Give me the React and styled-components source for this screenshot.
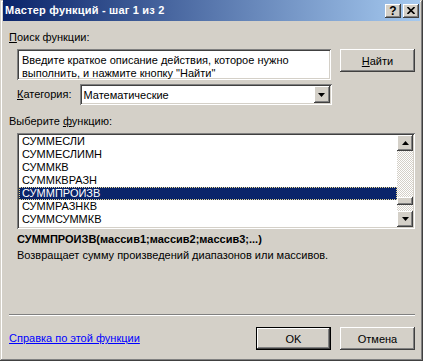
import styled, { createGlobalStyle, css } from "styled-components";

const Global = createGlobalStyle`
  html, body {
    margin: 0;
    padding: 0;
    background: #d4d0c8;
  }
  body {
    font-family: "Liberation Sans", Arial, sans-serif;
    font-size: 11px;
    color: #000;
  }
`;

const raised = css`
  background: #d4d0c8;
  box-shadow: inset -1px -1px #404040, inset 1px 1px #fff,
    inset -2px -2px #808080, inset 2px 2px #d4d0c8;
`;

const sunken = css`
  background: #fff;
  box-shadow: inset 1px 1px #808080, inset -1px -1px #fff,
    inset 2px 2px #404040, inset -2px -2px #d4d0c8;
`;

const Window = styled.div`
  width: 423px;
  height: 361px;
  box-sizing: border-box;
  padding: 0 3px 3px 3px;
  background: #d4d0c8;
  box-shadow: inset -1px -1px #404040, inset 1px 1px #d4d0c8,
    inset -2px -2px #808080, inset 2px 2px #fff;
  display: flex;
  flex-direction: column;
`;

const TitleBar = styled.div`
  height: 21px;
  display: flex;
  align-items: center;
  padding: 0 1px 0 2px;
  background: linear-gradient(to right, #0a246a, #a6caf0);
`;

const Title = styled.div`
  flex: 1;
  color: #fff;
  font-weight: bold;
  font-size: 11px;
  letter-spacing: 0.2px;
  line-height: 13px;
`;

const CaptionButton = styled.div`
  ${raised};
  width: 16px;
  height: 14px;
  margin-left: ${(p) => (p.$gap ? "2px" : "0")};
  display: flex;
  align-items: center;
  justify-content: center;
  font-weight: bold;
  font-size: 12px;
  line-height: 14px;
`;

const Content = styled.div`
  flex: 1;
  display: flex;
  flex-direction: column;
  padding: 0 5px 8px 6px;
`;

const Label = styled.div`
  line-height: 13px;
  height: 13px;
  margin-top: ${(p) => p.$top || 0}px;
  margin-left: ${(p) => p.$indent || 0}px;
  white-space: nowrap;
`;

const Row = styled.div`
  display: flex;
  align-items: ${(p) => p.$align || "flex-start"};
  margin-top: ${(p) => p.$top || 0}px;
  margin-left: ${(p) => p.$indent || 0}px;
`;

const SearchBox = styled.div`
  ${sunken};
  width: 314px;
  height: 31px;
  box-sizing: border-box;
  padding: 5px 3px 0 5px;
  line-height: 13px;
  white-space: nowrap;
  overflow: hidden;
`;

const Button = styled.div`
  ${raised};
  width: 75px;
  height: 23px;
  box-sizing: border-box;
  display: flex;
  align-items: center;
  justify-content: center;
  margin-left: ${(p) => p.$gap || 0}px;
  ${(p) =>
    p.$default &&
    css`
      border: 1px solid #000;
    `}
`;

const Select = styled.div`
  ${sunken};
  width: 252px;
  height: 21px;
  margin-left: 8px;
  box-sizing: border-box;
  display: flex;
  align-items: center;
  padding: 2px 2px 2px 4px;
`;

const SelectText = styled.div`
  flex: 1;
`;

const ArrowButton = styled.div`
  ${raised};
  width: 16px;
  height: ${(p) => p.$h || 16}px;
  display: flex;
  align-items: center;
  justify-content: center;
  flex-shrink: 0;
`;

const ListBox = styled.div`
  ${sunken};
  width: 398px;
  height: 96px;
  box-sizing: border-box;
  padding: 2px;
  display: flex;
`;

const Items = styled.div`
  flex: 1;
  display: flex;
  flex-direction: column;
`;

const Item = styled.div`
  height: 13px;
  line-height: 13px;
  padding-left: 3px;
  ${(p) =>
    p.$selected &&
    css`
      background: #0a246a;
      color: #fff;
      outline: 1px dotted #e8d890;
      outline-offset: -1px;
    `}
`;

const ScrollBar = styled.div`
  width: 16px;
  display: flex;
  flex-direction: column;
`;

const Track = styled.div`
  flex: 1;
  display: flex;
  flex-direction: column;
  justify-content: flex-end;
  padding-bottom: 6px;
  background: repeating-conic-gradient(#fff 0% 25%, #d4d0c8 0% 50%) 0 0 / 2px
    2px;
`;

const Thumb = styled.div`
  ${raised};
  height: 8px;
`;

const Signature = styled.div`
  font-weight: bold;
  line-height: 13px;
  margin: 4px 0 0 8px;
`;

const Description = styled.div`
  line-height: 13px;
  margin: 3px 0 0 8px;
`;

const Separator = styled.div`
  margin-top: auto;
  border-top: 1px solid #808080;
  border-bottom: 1px solid #fff;
  height: 0;
`;

const Footer = styled.div`
  display: flex;
  align-items: center;
  margin-top: 11px;
`;

const HelpLink = styled.a`
  color: #0000ff;
  text-decoration: underline;
  flex: 1;
  line-height: 13px;
`;

const Triangle = ({ up }) => (
  <svg width="7" height="4" viewBox="0 0 7 4">
    <polygon
      points={up ? "3.5,0 7,4 0,4" : "0,0 7,0 3.5,4"}
      fill="#000"
    />
  </svg>
);

const CloseGlyph = () => (
  <svg width="8" height="7" viewBox="0 0 8 7">
    <path d="M0.5 0 L7.5 7 M7.5 0 L0.5 7" stroke="#000" strokeWidth="1.6" />
  </svg>
);

const functions = [
  "СУММЕСЛИ",
  "СУММЕСЛИМН",
  "СУММКВ",
  "СУММКВРАЗН",
  "СУММПРОИЗВ",
  "СУММРАЗНКВ",
  "СУММСУММКВ",
];

export default function App() {
  return (
    <>
      <Global />
      <Window>
        <TitleBar>
          <Title>Мастер функций - шаг 1 из 2</Title>
          <CaptionButton>?</CaptionButton>
          <CaptionButton $gap>
            <CloseGlyph />
          </CaptionButton>
        </TitleBar>
        <Content>
          <Label $top={10}>
            <u>П</u>оиск функции:
          </Label>
          <Row $top={5} $indent={8}>
            <SearchBox>
              Введите краткое описание действия, которое нужно
              <br />
              выполнить, и нажмите кнопку "Найти"
            </SearchBox>
            <Button $gap={9}>
              <span>
                <u>Н</u>айти
              </span>
            </Button>
          </Row>
          <Row $top={4} $indent={8} $align="center">
            <Label>
              <u>К</u>атегория:
            </Label>
            <Select>
              <SelectText>Математические</SelectText>
              <ArrowButton $h={17}>
                <Triangle />
              </ArrowButton>
            </Select>
          </Row>
          <Label $top={10}>
            Выберите <u>ф</u>ункцию:
          </Label>
          <Row $top={5} $indent={8}>
            <ListBox>
              <Items>
                {functions.map((f) => (
                  <Item key={f} $selected={f === "СУММПРОИЗВ"}>
                    {f}
                  </Item>
                ))}
              </Items>
              <ScrollBar>
                <ArrowButton>
                  <Triangle up />
                </ArrowButton>
                <Track>
                  <Thumb />
                </Track>
                <ArrowButton>
                  <Triangle />
                </ArrowButton>
              </ScrollBar>
            </ListBox>
          </Row>
          <Signature>СУММПРОИЗВ(массив1;массив2;массив3;...)</Signature>
          <Description>
            Возвращает сумму произведений диапазонов или массивов.
          </Description>
          <Separator />
          <Footer>
            <HelpLink href="#">Справка по этой функции</HelpLink>
            <Button $default>OK</Button>
            <Button $gap={9}>Отмена</Button>
          </Footer>
        </Content>
      </Window>
    </>
  );
}
